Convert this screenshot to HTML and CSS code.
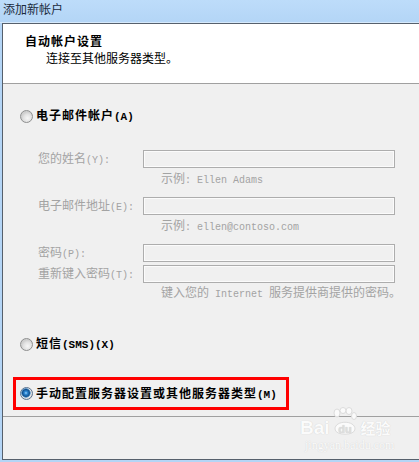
FILE: index.html
```html
<!DOCTYPE html>
<html lang="zh-CN">
<head>
    <meta charset="UTF-8">
    <title>添加新帐户</title>
    <link rel="stylesheet" href="styles.css">
</head>
<body>
    <div class="titlebar">添加新帐户</div>

    <div class="dialog">
        <div class="header">
            <div class="header-title">自动帐户设置</div>
            <div class="header-sub">连接至其他服务器类型。</div>
        </div>

        <div class="content">
            <div class="option option-email">
                <span class="radio"></span>
                <span class="option-label">电子邮件帐户<span class="lat-b">(A)</span></span>
            </div>

            <div class="fields">
                <div class="field-row">
                    <span class="field-label">您的姓名<span class="lat">(Y):</span></span>
                    <span class="textbox"></span>
                </div>
                <div class="hint">示例<span class="lat">: Ellen Adams</span></div>

                <div class="field-row row-gap">
                    <span class="field-label">电子邮件地址<span class="lat">(E):</span></span>
                    <span class="textbox"></span>
                </div>
                <div class="hint">示例<span class="lat">: ellen@contoso.com</span></div>

                <div class="field-row row-gap">
                    <span class="field-label">密码<span class="lat">(P):</span></span>
                    <span class="textbox"></span>
                </div>
                <div class="field-row row-tight">
                    <span class="field-label">重新键入密码<span class="lat">(T):</span></span>
                    <span class="textbox"></span>
                </div>
                <div class="hint hint-last">键入您的<span class="lat"> Internet </span>服务提供商提供的密码。</div>
            </div>

            <div class="option option-sms">
                <span class="radio"></span>
                <span class="option-label">短信<span class="lat-b">(SMS)(X)</span></span>
            </div>

            <div class="highlight">
                <div class="option">
                    <span class="radio checked"></span>
                    <span class="option-label">手动配置服务器设置或其他服务器类型<span class="lat-b">(M)</span></span>
                </div>
            </div>
        </div>

        <div class="footer"></div>

        <!-- watermark from the source screenshot -->
        <div class="watermark">
            <div class="wm-logo">
                <span class="wm-bai">Bai</span>
                <span class="wm-paw">
                    <svg width="26" height="30" viewBox="0 0 26 30">
                        <g fill="#fbfbfb" stroke="#dcdcdc" stroke-width="1">
                            <ellipse cx="5" cy="6" rx="3" ry="4"/>
                            <ellipse cx="11" cy="3.5" rx="3" ry="3"/>
                            <ellipse cx="17" cy="4" rx="3" ry="3.5"/>
                            <ellipse cx="22" cy="9" rx="2.5" ry="3.5"/>
                            <path d="M3 22 C3 13 23 13 23 22 C23 29 3 29 3 22 Z"/>
                        </g>
                        <text x="13" y="26" text-anchor="middle" font-size="11" font-weight="700" fill="#dedede" font-family="Liberation Sans, sans-serif">du</text>
                    </svg>
                </span>
                <span class="wm-jy">经验</span>
            </div>
            <div class="wm-url">jingyan.baidu.com</div>
        </div>
    </div>
</body>
</html>
```

FILE: styles.css
```css
body {
    margin: 0;
    height: 462px;
    overflow: hidden;
    background: #b4d5f6;
    font-family: "Noto Sans CJK SC", sans-serif;
    font-size: 12px;
    color: #000;
}

.titlebar {
    height: 23px;
    padding-left: 3px;
    box-sizing: border-box;
    line-height: 17px;
    color: #1b2b3d;
    background: linear-gradient(#bddcfa, #b3d5f6);
    box-shadow: inset 0 -1px #d6e9fb;
}

.dialog {
    position: relative;
    display: flex;
    flex-direction: column;
    height: 437px;
    box-sizing: border-box;
    margin-left: 2px;
    border: 1px solid #56606c;
    border-right: none;
    background: #f0f0f0;
}

.header {
    height: 60px;
    box-sizing: border-box;
    padding-top: 8px;
    background: #fff;
    border-bottom: 1px solid #a0a0a0;
}

.header-title {
    margin-left: 22px;
    line-height: 17px;
    font-weight: 700;
    letter-spacing: 1px;
}

.header-sub {
    margin-left: 43px;
    line-height: 17px;
}

.lat {
    font-family: "Liberation Mono", monospace;
    font-size: 10px;
    letter-spacing: 0;
}

.lat-b {
    font-family: "Liberation Mono", monospace;
    font-size: 11px;
    font-weight: 700;
    letter-spacing: 0;
}

.option {
    display: flex;
    align-items: center;
    gap: 3px;
    height: 16px;
    padding-left: 17px;
}

.option-label {
    line-height: 16px;
    font-weight: 700;
    letter-spacing: 1px;
}

.option-email {
    margin-top: 24px;
}

.option-sms {
    margin-top: 37px;
}

.radio {
    width: 13px;
    height: 13px;
    box-sizing: border-box;
    border-radius: 50%;
    border: 1px solid #8e8f8f;
    background: radial-gradient(circle at 60% 65%, #f6f6f6 0, #e2e2e2 4px, #cfcfcf 6px);
    flex-shrink: 0;
}

.radio.checked {
    border-color: #5a7390;
    background: radial-gradient(circle at 45% 45%, #9fd4ff 0, #2f8ad6 1.5px, #12518f 3.5px, #6aa2d0 4.5px, #eaeaea 5px, #d8d8d8 6px);
}

.fields {
    margin-top: 26px;
    margin-left: 35px;
    color: #a3a3a3;
}

.field-row {
    display: grid;
    grid-template-columns: 105px 252px;
    align-items: center;
    height: 18px;
}

.field-label {
    line-height: 14px;
}

.textbox {
    height: 18px;
    box-sizing: border-box;
    border: 1px solid #adadad;
    box-shadow: inset 0 0 0 1px #fbfbfb;
    background: #f0f0f0;
}

.row-gap {
    margin-top: 12px;
}

.row-tight {
    margin-top: 3px;
}

.hint {
    margin-top: 3px;
    padding-left: 123px;
    line-height: 14px;
    height: 14px;
    white-space: nowrap;
}

.hint-last {
    margin-top: 2px;
}

.highlight {
    width: 276px;
    height: 33px;
    box-sizing: border-box;
    margin-top: 25px;
    margin-left: 10px;
    border: 3px solid #f00;
    display: flex;
    align-items: center;
}

.highlight .option {
    padding-left: 4px;
}

.footer {
    flex: 1;
    margin-top: 6px;
    border-top: 1px solid #a0a0a0;
}

.watermark {
    position: absolute;
    left: 297px;
    top: 383px;
    color: #fbfbfb;
    text-shadow: 0 0 1px #c8c8c8;
}

.wm-logo {
    display: flex;
    align-items: flex-end;
    height: 30px;
}

.wm-bai {
    font-family: "Liberation Sans", sans-serif;
    font-size: 19px;
    font-weight: 700;
    line-height: 18px;
}

.wm-paw {
    display: flex;
    margin-left: 2px;
}

.wm-jy {
    font-size: 15px;
    font-weight: 700;
    line-height: 18px;
    margin-left: 3px;
}

.wm-url {
    margin-top: 2px;
    margin-left: 5px;
    font-family: "Liberation Serif", serif;
    font-size: 12px;
    line-height: 12px;
}
```
